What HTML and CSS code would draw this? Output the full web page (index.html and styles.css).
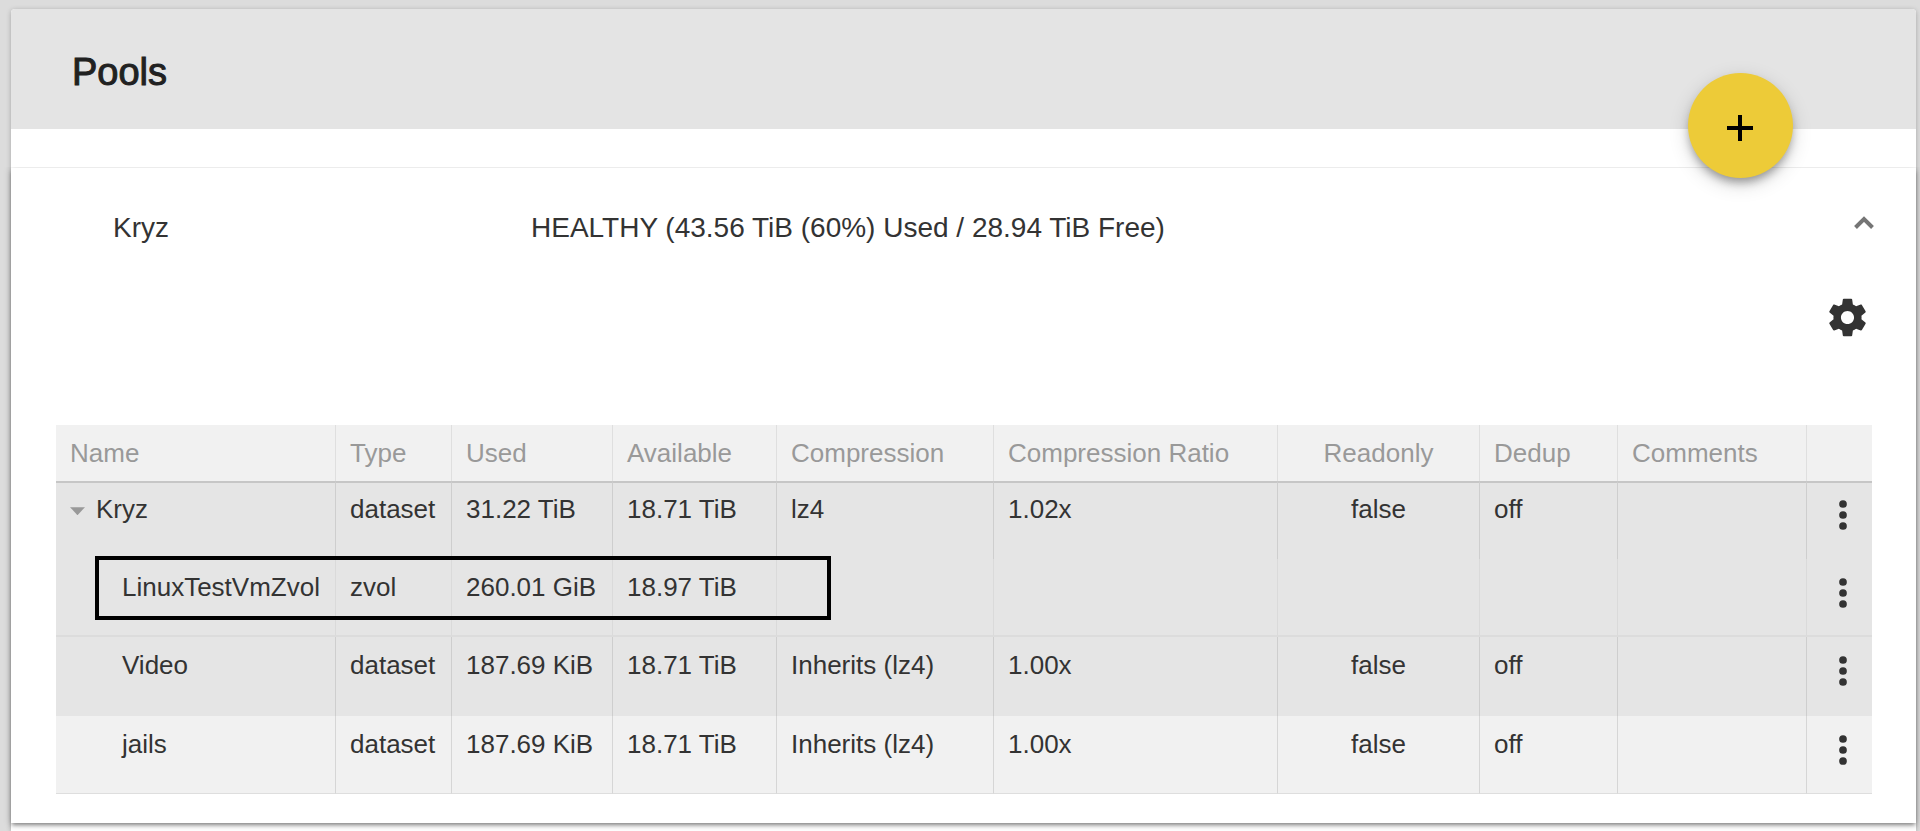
FILE: index.html
```html
<!DOCTYPE html>
<html lang="en">
<head>
  <meta charset="UTF-8" />
  <title>Pools</title>
  <meta name="viewport" content="width=device-width, initial-scale=1.0" />
  <link rel="stylesheet" href="styles.css">
</head>
<body>
  <main class="card">
    <header class="card-header">
      <h1>Pools</h1>
      <button type="button" class="add-btn" aria-label="Add">
        <svg viewBox="0 0 28 28" width="28" height="28"><path d="M13 1v26M0 14h26" fill="none" stroke="#000" stroke-width="4" /></svg>
      </button>
    </header>

    <section class="pool">
      <div class="pool-header">
        <span class="pool-name">Kryz</span>
        <span class="pool-status">HEALTHY (43.56 TiB (60%) Used / 28.94 TiB Free)</span>
        <button type="button" class="icon-btn" aria-label="Collapse">
          <svg viewBox="0 0 20 24" width="20" height="24"><path d="M1.5 17.5L10 9l8.500 8.500" fill="none" stroke="#757575" stroke-width="4" /></svg>
        </button>
      </div>

      <div class="pool-tools">
        <button type="button" class="icon-btn" aria-label="Pool settings">
          <svg viewBox="0 0 24 24" width="45" height="45"><path fill="#333" d="M19.430 12.980c.040-.320.070-.640.070-.980s-.030-.660-.070-.980l2.110-1.650c.190-.150.240-.420.120-.640l-2-3.460c-.120-.220-.390-.300-.610-.220l-2.490 1c-.520-.400-1.080-.730-1.690-.980l-.380-2.650C14.460 2.180 14.250 2 14 2h-4c-.250 0-.460.180-.490.420l-.380 2.650c-.610.250-1.170.590-1.690.980l-2.490-1c-.230-.090-.490 0-.610.220l-2 3.460c-.130.220-.070.490.120.640l2.110 1.650c-.040.320-.070.650-.070.980s.030.660.070.980l-2.110 1.650c-.190.150-.240.420-.120.640l2 3.460c.120.220.390.300.610.220l2.490-1c.520.400 1.080.730 1.690.980l.380 2.650c.030.240.240.420.490.420h4c.250 0 .460-.180.490-.420l.380-2.650c.610-.250 1.170-.590 1.690-.980l2.490 1c.230.090.490 0 .610-.220l2-3.460c.120-.220.070-.490-.120-.640l-2.110-1.650zM12 15.500c-1.930 0-3.500-1.570-3.500-3.500s1.570-3.500 3.500-3.500 3.500 1.570 3.500 3.500-1.570 3.500-3.500 3.500z" /></svg>
        </button>
      </div>

      <div class="table-wrap">
        <table>
          <colgroup>
            <col class="col-name"><col class="col-type"><col class="col-used"><col class="col-avail"><col class="col-comp">
            <col class="col-ratio"><col class="col-readonly"><col class="col-dedup"><col class="col-comments"><col class="col-menu">
          </colgroup>
          <thead>
            <tr>
              <th>Name</th>
              <th>Type</th>
              <th>Used</th>
              <th>Available</th>
              <th>Compression</th>
              <th>Compression Ratio</th>
              <th class="center">Readonly</th>
              <th>Dedup</th>
              <th>Comments</th>
              <th></th>
            </tr>
          </thead>
          <tbody>
            <tr>
              <td><button type="button" class="caret" aria-label="Toggle children"></button>Kryz</td>
              <td>dataset</td>
              <td>31.22 TiB</td>
              <td>18.71 TiB</td>
              <td>lz4</td>
              <td>1.02x</td>
              <td class="center">false</td>
              <td>off</td>
              <td></td>
              <td class="menu"><button type="button" class="icon-btn" aria-label="Actions"><svg viewBox="0 0 24 24" width="44" height="44"><g fill="#333"><circle cx="12" cy="6" r="2.100" /><circle cx="12" cy="12" r="2.100" /><circle cx="12" cy="18" r="2.100" /></g></svg></button></td>
            </tr>
            <tr class="zvol">
              <td class="child">LinuxTestVmZvol</td>
              <td>zvol</td>
              <td>260.01 GiB</td>
              <td>18.97 TiB</td>
              <td></td>
              <td></td>
              <td></td>
              <td></td>
              <td></td>
              <td class="menu"><button type="button" class="icon-btn" aria-label="Actions"><svg viewBox="0 0 24 24" width="44" height="44"><g fill="#333"><circle cx="12" cy="6" r="2.100" /><circle cx="12" cy="12" r="2.100" /><circle cx="12" cy="18" r="2.100" /></g></svg></button></td>
            </tr>
            <tr>
              <td class="child">Video</td>
              <td>dataset</td>
              <td>187.69 KiB</td>
              <td>18.71 TiB</td>
              <td>Inherits (lz4)</td>
              <td>1.00x</td>
              <td class="center">false</td>
              <td>off</td>
              <td></td>
              <td class="menu"><button type="button" class="icon-btn" aria-label="Actions"><svg viewBox="0 0 24 24" width="44" height="44"><g fill="#333"><circle cx="12" cy="6" r="2.100" /><circle cx="12" cy="12" r="2.100" /><circle cx="12" cy="18" r="2.100" /></g></svg></button></td>
            </tr>
            <tr class="light">
              <td class="child">jails</td>
              <td>dataset</td>
              <td>187.69 KiB</td>
              <td>18.71 TiB</td>
              <td>Inherits (lz4)</td>
              <td>1.00x</td>
              <td class="center">false</td>
              <td>off</td>
              <td></td>
              <td class="menu"><button type="button" class="icon-btn" aria-label="Actions"><svg viewBox="0 0 24 24" width="44" height="44"><g fill="#333"><circle cx="12" cy="6" r="2.100" /><circle cx="12" cy="12" r="2.100" /><circle cx="12" cy="18" r="2.100" /></g></svg></button></td>
            </tr>
          </tbody>
        </table>
        <div class="highlight"></div>
      </div>
    </section>
  </main>
</body>
</html>
```

FILE: styles.css
```css
* {
  box-sizing: border-box;
}

body {
  margin: 0;
  padding: 9px 4px 0 11px;
  min-height: 100vh;
  display: flex;
  font-family: "Helvetica Neue", "Liberation Sans", Arial, sans-serif;
  font-size: 26px;
  line-height: 32px;
  color: #333;
  background-color: #dcdcdc;
}

button {
  padding: 0;
  border: none;
  background: none;
  cursor: pointer;
}

.card {
  flex: 1;
  min-width: 0;
  padding-bottom: 7px;
  background-color: #fff;
  border-radius: 4px 4px 0 0;
  box-shadow: 0 1px 5px rgba(0, 0, 0, 0.25);
}

.card-header {
  position: relative;
  z-index: 1;
  height: 120px;
  padding: 6px 61px 0;
  display: flex;
  align-items: center;
  background-color: #e4e4e4;
  border-radius: 4px 4px 0 0;
}

.card-header h1 {
  margin: 0;
  font-size: 38px;
  line-height: 48px;
  font-weight: 400;
  color: #212121;
  -webkit-text-stroke: 1px #212121;
}

/* floating button over the header edge */
.add-btn {
  position: absolute;
  right: 123px;
  bottom: -49px;
  width: 105px;
  height: 105px;
  padding-top: 4px;
  display: flex;
  align-items: center;
  justify-content: center;
  border-radius: 50%;
  background-color: #edcb38;
  box-shadow: 0 6px 10px -2px rgba(0, 0, 0, 0.35), 0 6px 20px rgba(0, 0, 0, 0.16);
}

.pool {
  margin-top: 39px;
  padding-bottom: 29px;
  background-color: #fff;
  box-shadow: 0 3px 4px -1px rgba(0, 0, 0, 0.4), 0 1px 8px rgba(0, 0, 0, 0.2);
  clip-path: inset(-1px -8px -8px -11px);
}

.pool-header {
  display: grid;
  grid-template-columns: 418px 1fr auto;
  padding: 42px 42px 18px 102px;
  font-size: 28px;
  line-height: 36px;
}

.icon-btn {
  display: block;
  align-self: start;
}

.icon-btn svg {
  display: block;
}

.pool-tools {
  display: flex;
  justify-content: flex-end;
  padding: 31px 46px 0;
}

.table-wrap {
  position: relative;
  margin: 85px 44px 0 45px;
}

table {
  width: 100%;
  table-layout: fixed;
  border-collapse: separate;
  border-spacing: 0;
}

.col-name { width: 280px; }
.col-type { width: 116px; }
.col-used { width: 161px; }
.col-avail { width: 164px; }
.col-comp { width: 217px; }
.col-ratio { width: 284px; }
.col-readonly { width: 202px; }
.col-dedup { width: 138px; }
.col-comments { width: 189px; }
.col-menu { width: 65px; }

th,
td {
  padding: 12px 0 0 14px;
  text-align: left;
  vertical-align: top;
  font-weight: 400;
  white-space: nowrap;
  border-right: 1px solid #cecece;
}

th {
  height: 56px;
  color: #999;
  background-color: #f1f1f1;
  border-right-color: #dfdfdf;
}

td {
  height: 78px;
  background-color: #e5e5e5;
}

tbody tr:nth-child(3) td {
  height: 79px;
}

tbody tr:first-child td {
  padding-top: 10px;
  border-top: 2px solid #c6c6c6;
}

.zvol td {
  border-right-color: #dadada;
  border-bottom: 2px solid #dcdcdc;
}

.light td {
  background-color: #f1f1f1;
  border-right-color: #d6d6d6;
  border-bottom: 1px solid #dedede;
}

th:last-child,
td:last-child {
  border-right: none;
}

.center {
  padding-left: 0;
  text-align: center;
}

.child {
  padding-left: 66px;
}

.caret {
  width: 15px;
  height: 8px;
  margin-right: 11px;
  vertical-align: middle;
  background-color: #999;
  clip-path: polygon(0 0, 100% 0, 50% 100%);
}

/* frame drawn round the zvol row */
.highlight {
  position: absolute;
  top: 131px;
  left: 39px;
  width: 736px;
  height: 64px;
  border: 4px solid #000;
  pointer-events: none;
}
```
